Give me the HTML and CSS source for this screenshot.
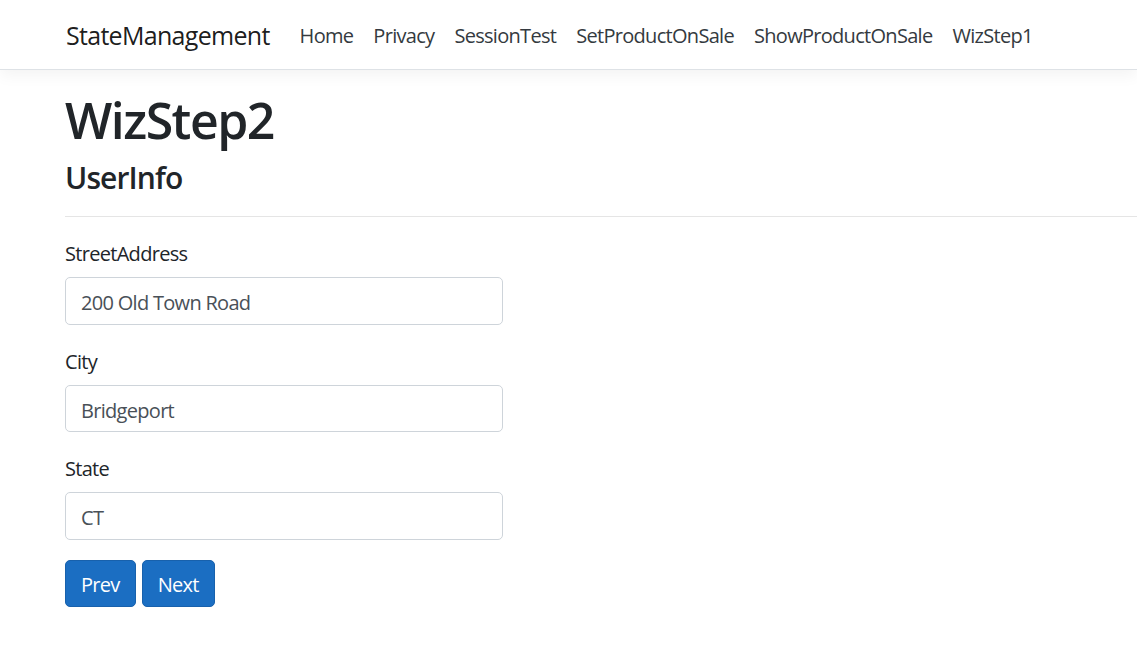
FILE: index.html
```html
<!DOCTYPE html>
<html lang="en">
<head>
<meta charset="utf-8">
<title>WizStep2 - StateManagement</title>
<link rel="stylesheet" href="styles.css">
</head>
<body>
<header class="navbar">
  <a class="brand" href="#">StateManagement</a>
  <nav class="nav">
    <a class="nav-link" href="#">Home</a>
    <a class="nav-link" href="#">Privacy</a>
    <a class="nav-link" href="#">SessionTest</a>
    <a class="nav-link" href="#">SetProductOnSale</a>
    <a class="nav-link" href="#">ShowProductOnSale</a>
    <a class="nav-link" href="#">WizStep1</a>
  </nav>
</header>
<main class="main">
  <h1 class="title">WizStep2</h1>
  <h4 class="subtitle">UserInfo</h4>
  <hr class="rule">
  <form class="form">
    <div class="form-group">
      <label class="label" for="street">StreetAddress</label>
      <input class="input" id="street" type="text" value="200 Old Town Road">
    </div>
    <div class="form-group">
      <label class="label" for="city">City</label>
      <input class="input" id="city" type="text" value="Bridgeport">
    </div>
    <div class="form-group">
      <label class="label" for="state">State</label>
      <input class="input" id="state" type="text" value="CT">
    </div>
    <div class="actions">
      <button class="btn" type="button">Prev</button>
      <button class="btn" type="button">Next</button>
    </div>
  </form>
</main>
</body>
</html>
```
FILE: styles.css
```css
* { box-sizing: border-box; }
html, body { margin: 0; padding: 0; }
body {
  font-family: "Segoe UI", "Open Sans", "Noto Sans", sans-serif;
  font-size: 20px;
  line-height: 1.5;
  letter-spacing: -0.035em;
  color: #212529;
  background: #fff;
  overflow: hidden;
}
.navbar {
  display: flex;
  align-items: center;
  height: 70px;
  padding: 2px 0 0 66px;
  border-bottom: 1px solid #dee2e6;
  box-shadow: 0 5px 15px rgba(0,0,0,.05);
  background: #fff;
  margin-bottom: 20px;
}
.brand {
  font-size: 25px;
  color: rgba(0,0,0,.9);
  text-decoration: none;
  margin-right: 20px;
  line-height: 1.5;
}
.nav { display: flex; }
.nav-link {
  color: #343a40;
  text-decoration: none;
  padding: 0 10px;
  font-size: 20px;
}
.main { padding-left: 65px; }
.title {
  font-size: 50px;
  font-weight: 600;
  line-height: 1.2;
  margin: 0 0 10px;
  letter-spacing: -0.03em;
}
.subtitle {
  font-size: 30px;
  font-weight: 600;
  line-height: 1.2;
  margin: 0 0 10px;
  letter-spacing: -0.03em;
}
.rule {
  margin: 20px 0;
  border: 0;
  border-top: 1px solid rgba(0,0,0,.1);
}
.form { width: 438px; }
.form-group { margin-bottom: 20px; }
.label {
  display: block;
  padding-top: 2px;
  margin-bottom: 8px;
}
.input {
  display: block;
  width: 100%;
  height: 47.5px;
  padding: 9.5px 15px 5.5px;
  font: inherit;
  letter-spacing: inherit;
  color: #495057;
  border: 1px solid #ced4da;
  border-radius: 5px;
  background: #fff;
}
.actions { display: flex; gap: 6px; }
.btn {
  font: inherit;
  letter-spacing: inherit;
  color: #fff;
  background: #1b6ec2;
  border: 1px solid #1861ac;
  border-radius: 5px;
  padding: 9.5px 15px 5.5px;
  line-height: 1.5;
}
```
